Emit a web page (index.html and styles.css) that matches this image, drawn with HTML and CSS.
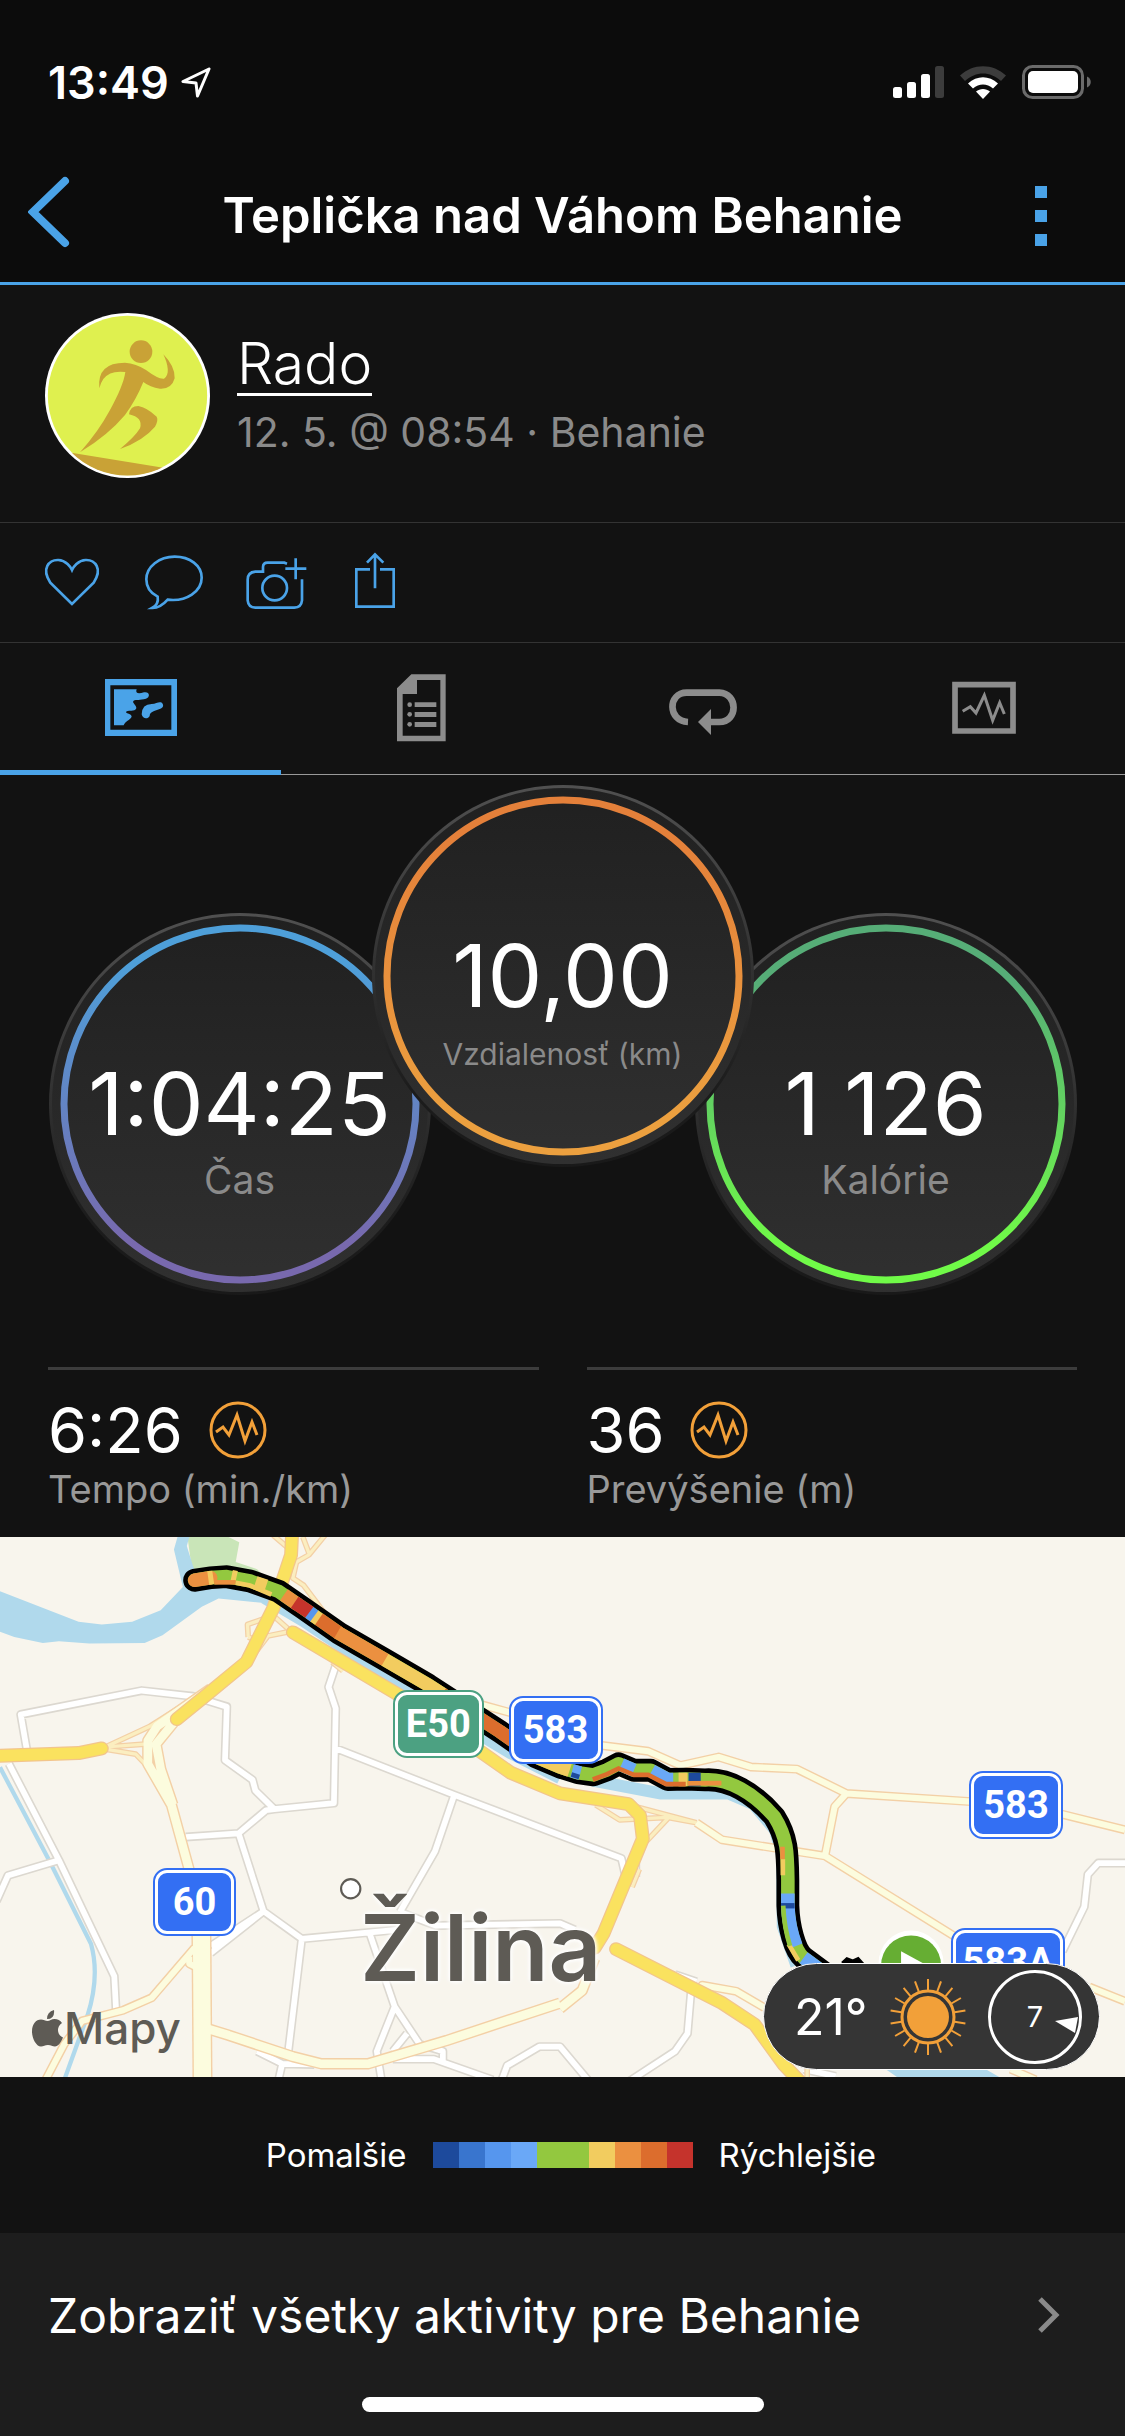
FILE: index.html
```html
<!DOCTYPE html>
<html lang="sk">
<head>
<meta charset="utf-8">
<meta name="viewport" content="width=device-width, initial-scale=1">
<title>Teplička nad Váhom Behanie</title>
<link rel="stylesheet" href="styles.css">
</head>
<body>
<header class="top">
  <div class="status">
    <div class="status-left">
      <span>13:49</span>
      <svg width="30" height="31" viewBox="0 0 30 31" fill="none" stroke="#fff" stroke-width="3" stroke-linejoin="round"><path d="M28 2 2 14.500l13 1.500 1.500 13z"/></svg>
    </div>
    <div class="status-right">
      <svg width="51" height="32" viewBox="0 0 51 32"><g fill="#fff"><rect y="21" width="9" height="11" rx="2.500"/><rect x="14" y="16" width="9" height="16" rx="2.500"/><rect x="28" y="8" width="9" height="24" rx="2.500"/></g><rect x="42" width="9" height="32" rx="2.500" fill="#3c3c3c"/></svg>
      <svg width="46" height="33" viewBox="0 0 46 33"><path d="M0 9.500C13-3 33-3 46 9.500l-5 5.500C30 5 16 5 5 15z" fill="#3c3c3c"/><path d="M8 17.500c9-8.500 21-8.500 30 0l-5 5c-6-5.500-14-5.500-20 0z" fill="#fff"/><path d="M16 25.500c4-3.500 10-3.500 14 0l-7 7.500z" fill="#fff"/></svg>
      <svg width="69" height="34" viewBox="0 0 69 34"><rect x="1.500" y="1.500" width="59" height="31" rx="9" fill="none" stroke="#6b6b6b" stroke-width="3"/><rect x="6" y="6" width="50" height="22" rx="5" fill="#fff"/><path d="M65 11.500c5 2 5 9 0 11z" fill="#6b6b6b"/></svg>
    </div>
  </div>
  <nav class="nav">
    <button class="icon-button nav-back" type="button" aria-label="Späť"><svg width="42" height="72" viewBox="0 0 42 72" fill="none" stroke="#4aa3e8" stroke-width="8" stroke-linecap="round"><path d="M37 5 5 36l32 31"/></svg></button>
    <h1 class="title">Teplička nad Váhom Behanie</h1>
    <button class="icon-button nav-menu" type="button" aria-label="Ponuka"><svg width="12" height="60" viewBox="0 0 12 60" fill="#4aa3e8"><path d="M0 0h12v12H0zM0 24h12v12H0zM0 48h12v12H0z"/></svg></button>
  </nav>
</header>

<main>
  <section class="profile">
    <svg class="avatar" viewBox="45 39 495 495">
      <defs><clipPath id="avatar-clip"><circle cx="292.500" cy="286.500" r="240"/></clipPath></defs>
      <circle cx="292.500" cy="286.500" r="247.500" fill="#fff"/>
      <circle cx="292.500" cy="286.500" r="239" fill="#dff04f"/>
      <g fill="#c9a236" clip-path="url(#avatar-clip)">
        <circle cx="333" cy="155" r="34"/>
        <path d="M208 265Q200 188 285 188 318 190 348 210 385 238 402 236C420 226 415 195 400 163Q436 200 434 235 425 268 390 266 360 262 340 246 318 300 285 345 235 405 150 457 205 395 240 330C265 285 282 245 286 216Q240 210 220 237 211 250 208 265z"/>
        <path d="M297 343Q300 318 325 318 350 322 380 350 386 360 375 380 340 422 270 447 315 410 330 385 340 352 297 343z"/>
        <path d="M110 456 400 503 420 540H110z"/>
      </g>
    </svg>
    <div class="profile-text">
      <a class="name" href="#profil">Rado</a>
      <p class="meta">12. 5. @ 08:54 · Behanie</p>
    </div>
  </section>

  <section class="actions">
    <button class="icon-button" type="button" aria-label="Páči sa mi"><svg width="54" height="60" viewBox="45 758 162 180" class="line-icon"><path d="M126 911 61 847C33 805 57 778 85 779 108 780 122 800 126 809 130 800 144 780 167 779 195 778 219 805 191 847z"/></svg></button>
    <button class="icon-button" type="button" aria-label="Komentovať"><svg width="60" height="60" viewBox="342 758 180 180" class="line-icon"><path d="M366 923Q387 912 383 889C360 878 349 860 349 837 349 799 388 769 434 769S515 796 515 832C515 872 470 905 413 898Q390 924 366 923z"/></svg></button>
    <button class="icon-button" type="button" aria-label="Pridať fotografiu"><svg width="60" height="60" viewBox="656 758 180 180" class="line-icon"><path d="M770 790 762 787H712Q698 787 698 800V814H675Q652 816 652 838V900Q654 921 675 922H792Q813 921 815 900V837M765 805H828M796 774V837"/><circle cx="733" cy="863" r="37"/></svg></button>
    <button class="icon-button" type="button" aria-label="Zdieľať"><svg width="42" height="60" viewBox="972 758 126 180" class="line-icon"><path d="M1020 807H979V919H1091V807H1050M1035 762V864M1011 787 1035 762 1060 787"/></svg></button>
  </section>

  <nav class="tabs">
    <button class="icon-button tab tab-active" type="button" aria-label="Mapa"><svg width="72" height="57" viewBox="45 57 216 171"><path fill="currentColor" fill-rule="evenodd" d="M45 57H261V228H45zM61 76V209H244V76z"/><path fill="currentColor" d="M72 88H140C135 100 145 103 162 97 180 94 181 112 168 116 150 121 138 118 131 122 124 128 140 134 139 145 134 158 115 147 108 156 109 162 124 160 125 170 120 180 105 184 101 196H72zM155 163Q156 132 185 132C198 131 205 125 213 127 223 133 221 144 209 147 185 155 180 158 179 168 174 178 158 178 155 163z"/></svg></button>
    <button class="icon-button tab" type="button" aria-label="Podrobnosti"><svg width="49" height="68" viewBox="922 41 147 204" fill="currentColor"><path fill-rule="evenodd" d="M965 42H1068V243H922V84zM982 59V101H939V226H1052V59z"/><path d="M975 126h65v14h-65zM975 155h65v15h-65zM975 185h65v15h-65z"/><circle cx="960" cy="133" r="7"/><circle cx="960" cy="162" r="7"/><circle cx="960" cy="192" r="7"/></svg></button>
    <button class="icon-button tab" type="button" aria-label="Okruhy"><svg width="68" height="68" viewBox="57 41 204 204"><path d="M114 185C52 182 53 97 110 97H208C265 99 265 185 208 185H178" fill="none" stroke="currentColor" stroke-width="20"/><path d="M144 185 183 146V224z" fill="currentColor"/></svg></button>
    <button class="icon-button tab" type="button" aria-label="Grafy"><svg width="64" height="54" viewBox="907 62 192 162" fill="none" stroke="currentColor"><path stroke-width="17" d="M916 73H1090V212H916z"/><path stroke-width="9" d="M939 153 962 139 979 158 1004 105 1029 180 1050 127 1064 161"/></svg></button>
  </nav>

  <section class="rings">
    <div class="ring ring-side">
      <svg class="dial" viewBox="0 0 382 382">
        <defs>
          <linearGradient id="face" x2="0" y2="1"><stop stop-color="#202020"/><stop offset="1" stop-color="#303030"/></linearGradient>
          <linearGradient id="edge" x2="0" y2="1"><stop stop-color="#505050"/><stop offset=".5" stop-color="#303030"/><stop offset=".8" stop-color="#1c1c1c"/><stop offset="1" stop-color="#191919"/></linearGradient>
          <linearGradient id="blue" x2="0" y2="1"><stop offset=".1" stop-color="#4e9fd9"/><stop offset=".9" stop-color="#7869ae"/></linearGradient>
        </defs>
        <circle cx="191" cy="191" r="191" fill="url(#edge)"/><circle cx="191" cy="191" r="188" fill="url(#face)"/>
        <circle cx="191" cy="191" r="176" fill="none" stroke="url(#blue)" stroke-width="7"/>
      </svg>
      <div class="ring-text"><strong class="ring-value">1:04:25</strong><span class="ring-label">Čas</span></div>
    </div>
    <div class="ring ring-main">
      <svg class="dial" viewBox="0 0 382 382">
        <defs><linearGradient id="orange" x2="0" y2="1"><stop offset=".1" stop-color="#e4803a"/><stop offset=".9" stop-color="#eca03f"/></linearGradient></defs>
        <circle cx="191" cy="191" r="191" fill="url(#edge)"/><circle cx="191" cy="191" r="188" fill="url(#face)"/>
        <circle cx="191" cy="191" r="176" fill="none" stroke="url(#orange)" stroke-width="7"/>
      </svg>
      <div class="ring-text"><strong class="ring-value">10,00</strong><span class="ring-label ring-label-small">Vzdialenosť (km)</span></div>
    </div>
    <div class="ring ring-side">
      <svg class="dial" viewBox="0 0 382 382">
        <defs><linearGradient id="green" x2="0" y2="1"><stop offset=".15" stop-color="#56ad77"/><stop offset=".9" stop-color="#70fa48"/></linearGradient></defs>
        <circle cx="191" cy="191" r="191" fill="url(#edge)"/><circle cx="191" cy="191" r="188" fill="url(#face)"/>
        <circle cx="191" cy="191" r="176" fill="none" stroke="url(#green)" stroke-width="7"/>
      </svg>
      <div class="ring-text"><strong class="ring-value">1 126</strong><span class="ring-label">Kalórie</span></div>
    </div>
  </section>

  <section class="stats">
    <div class="stat">
      <div class="stat-row"><span class="stat-value">6:26</span>
        <button class="icon-button" type="button" aria-label="Graf tempa"><svg width="58" height="58" viewBox="0 0 58 58" fill="none" stroke="#f2a039" stroke-width="3"><circle cx="29" cy="29" r="27"/><path d="m7 31 7-5 6 8 8-20 8 26 7-19 5 13"/></svg></button></div>
      <p class="stat-label">Tempo (min./km)</p>
    </div>
    <div class="stat">
      <div class="stat-row"><span class="stat-value">36</span>
        <button class="icon-button" type="button" aria-label="Graf prevýšenia"><svg width="58" height="58" viewBox="0 0 58 58" fill="none" stroke="#f2a039" stroke-width="3"><circle cx="29" cy="29" r="27"/><path d="m7 31 7-5 6 8 8-20 8 26 7-19 5 13"/></svg></button></div>
      <p class="stat-label">Prevýšenie (m)</p>
    </div>
  </section>

  <section class="map">
    <svg class="map-canvas" viewBox="0 20 3150 1512" preserveAspectRatio="xMidYMid slice" fill="none">
      <defs>
        <g id="minor">
          <path d="M75 615 58 517 397 450 540 466 635 495 630 645 707 700 715 730 768 782 745 785 668 850 520 860M768 782 935 765 940 500 920 440 940 380M935 610 1272 742 1568 855 1740 920 1752 972M1780 932V972M1272 742 1218 900 1120 1070M668 850 738 1068 845 1145 1110 1120M738 1068 590 1185M738 1068 590 1165M845 1145 805 1480M1120 1070 1220 1108 1568 1102 1610 1120M1035 1130 1105 1335 1175 1440 1240 1460V1485M1105 1335 1055 1460 1068 1540M1100 1460 1140 1410M25 655 165 925 320 1250 325 1345M165 925 22 968-10 1040M720 1460 790 1495 880 1497M790 1495 780 1540M1100 1482H1215L1380 1540M1405 1540 1420 1500 1510 1447H1568L1650 1545M1880 1245 1936 1280 1925 1410 1890 1460 1760 1545M1890 1245 1950 1265M2975 1180 3036 1055 3046 965 3075 933H3150M2250 1510 2340 1530"/>
        </g>
        <g id="ramps">
          <path d="M295 608 420 550 570 455M295 608 405 600M295 614 380 628 430 680M695 300 693 265 765 240 810 280M810 285 750 297 695 370M695 300 720 310M765 15 812 55M910 15 865 70 830 90 820 135 850 155 910 235M848 20 865 65M930 370 960 395M1668 770 1735 812 1870 805 1950 820M1760 770 1950 820M1810 872 1870 808M1770 1000 1790 950M2260 1505V1540"/>
        </g>
        <g id="pale">
          <path d="M1350 490 1430 512 1560 575 1680 603 1815 620 1905 660 2012 636 2103 664 2232 670 2370 738 2720 761M2960 793 3150 840M2370 738 2337 775 2310 913M1950 820 2022 868 2310 913 2700 1155M3050 1280 3150 1320M1966 1290 1966 1275 2062 1292 2140 1338M2830 1510 2900 1540"/>
          <path d="M545 1170 425 1310 345 1345 230 1375 180 1440 125 1545M530 1195V1215L560 1230"/>
        </g>
        <g id="pale-wide">
          <path d="M590 445 440 550 414 590V655L480 770 532 960M490 535 437 600 450 670 484 770M575 1395 640 1415 820 1475 900 1495H1030L1250 1430 1568 1325M1568 1340 1630 1290 1665 1200"/>
        </g>
        <g id="main">
          <path d="M818 10 815 70 765 220 690 370 575 465 495 530M-10 633 220 625 285 612M820 287 1130 470M1330 610 1430 680 1568 738 1760 768 1792 800 1800 865 1690 1130 1665 1170M1725 1174 2022 1325 2113 1385 2194 1497 2240 1545"/>
        </g>
        <path id="track" d="M545 141Q590 132 635 131L700 143 780 172 850 220 950 290 1080 365 1200 435 1400 565 1500 635 1568 664 1618 680 1662 686 1700 672 1732 655 1775 673 1822 673 1870 699 1920 698 1975 700C2040 696 2110 736 2168 803 2205 862 2205 905 2206 982V1052C2208 1112 2225 1178 2250 1198L2320 1250"/>
      </defs>
      <path fill="#c9e5b8" d="M525 20H640L670 35 660 90 720 110 760 150 540 130z"/>
      <path fill="#b0d9ec" d="M0 172 220 257 285 265 370 257 450 225 512 160 487 55 497 20H530L523 45 540 100 560 150 780 185 760 207 612 192 565 215 455 295 405 317 250 318 165 312 120 317 40 300 0 285zM2480 1510 2530 1545H2820L2760 1510z"/>
      <g stroke="#b0d9ec"><path stroke-width="12" d="M0 665 140 930 255 1160Q280 1250 245 1360L180 1540"/><path stroke-width="34" d="M740 190 850 255 1140 450 1430 625 1568 695"/><path stroke-width="34" d="M1660 702 1850 738H2040L2110 768 2170 840 2190 910 2192 1110 2230 1220"/></g>
      <g stroke-linejoin="round">
        <use href="#minor" stroke="#dcd8d0" stroke-width="25"/><use href="#minor" stroke="#fff" stroke-width="16"/>
        <g stroke="#f3d0a6"><use href="#ramps" stroke-width="16"/><use href="#pale" stroke-width="25"/><use href="#pale-wide" stroke-width="32"/><path stroke-width="56" d="M564 1130 567 1540"/></g>
        <use href="#ramps" stroke="#fbeec0" stroke-width="9"/>
        <g stroke="#fcfcde"><use href="#pale" stroke-width="17"/><use href="#pale-wide" stroke-width="24"/><path stroke-width="48" d="M564 1130 567 1540"/></g>
        <g stroke-linecap="round"><use href="#main" stroke="#f2c58c" stroke-width="39"/><use href="#main" stroke="#fae25f" stroke-width="32"/></g>
        <use href="#track" stroke="#000" stroke-width="64" stroke-linecap="round"/>
        <use href="#track" stroke="#93c83f" stroke-width="38" stroke-linecap="round"/>
      </g>
      <g stroke-width="38">
        <path stroke="#eb9040" stroke-linecap="round" d="M545 141 590 134"/>
        <path stroke="#f2cc5f" d="M583 135 597 133M648 131 662 134M715 148 745 158"/>
        <path stroke="#eb9040" d="M795 182 835 210"/>
        <path stroke="#c5332c" d="M825 203 868 232"/>
        <path stroke="#5696ee" d="M866 231 882 243"/>
        <path stroke="#f2cc5f" d="M880 241 895 252"/>
        <path stroke="#dc6d2d" d="M893 250 950 290"/>
        <path stroke="#eb9040" d="M945 287 1080 365"/>
        <path stroke="#f2cc5f" d="M1078 364 1200 435 1240 461"/>
        <path stroke="#dc6d2d" d="M1238 460 1400 565 1500 635"/>
        <path stroke="#f2cc5f" d="M1500 635 1568 664 1595 673"/>
        <path stroke="#6aa8f7" d="M1602 675 1625 681M1740 658 1775 673M1825 675 1870 699 1885 699"/>
        <path stroke="#f2cc5f" d="M1900 699H1925"/>
        <path stroke="#1d4a9c" d="M1928 699H1962"/>
        <path stroke="#6aa8f7" d="M2206 1018V1052Q2208 1112 2229 1165M2250 1198 2320 1250"/>
        <path stroke="#1d4a9c" d="M2206 1045V1060"/>
      </g>
      <g stroke-width="13">
        <path stroke="#eb9040" d="M600 147 660 147"/><path stroke="#f2cc5f" d="M660 148 700 156 760 181"/>
        <path stroke="#dc6d2d" d="M1660 699 1700 684 1732 668 1775 686 1815 686 1865 712H1920"/>
        <path stroke="#eb9040" d="M1925 710 2020 709M2191 887V922"/><path stroke="#f2cc5f" d="M2192 922V967M2208 1160 2235 1205"/>
        <path stroke="#93c83f" d="M2193 1052Q2195 1110 2212 1165"/>
        <path stroke="#1d4a9c" d="M1600 685 1622 692"/>
      </g>
      <path stroke="#000" stroke-width="14" d="M2360 1215 2372 1204 2388 1210 2402 1204 2415 1218"/>
      <circle cx="2551" cy="1213" r="91" fill="#fff"/><circle cx="2551" cy="1220" r="84" fill="#66ae33"/><path fill="#fff" d="M2523 1180 2600 1222 2523 1264z"/>
      <circle cx="982" cy="1005" r="27" fill="#fff" stroke="#5e5b55" stroke-width="6"/>
    </svg>
    <span class="city">Žilina</span>
    <span class="shield shield-e50">E50</span>
    <span class="shield shield-583-west">583</span>
    <span class="shield shield-583-east">583</span>
    <span class="shield shield-60">60</span>
    <span class="shield shield-583a">583A</span>
    <span class="credit"><svg width="31" height="37" viewBox="0 0 31 37" fill="#5e5b55"><path d="M22 0q1 9-7 9 0-7 7-9zM15.500 11c2 0 4-2 7-2 3 0 6 1.500 7.500 4-6 4-5 12 1 14.500-2 5-5 9-8 9-2.500 0-4-1.500-7-1.500s-4.500 1.500-7 1.500C4 36.500 0 28 0 21.500 0 14 4 9.500 9 9.500c2.500 0 4.500 1.500 6.500 1.500z"/></svg>Mapy</span>
    <div class="weather">
      <span class="temp">21°</span>
      <svg class="sun" width="76" height="76" viewBox="-38 -38 76 76"><circle r="21" fill="#f2a039"/><g fill="none" stroke="#f2a039"><circle r="26" stroke-width="3"/><path stroke-width="2" d="M0-27V-38M0 27V38M9.200-25.400 13-35.700M-9.200 25.400-13 35.700M17.400-20.700 24.400-29.100M-17.400 20.700-24.400 29.100M23.400-13.500 32.900-19M-23.400 13.500-32.900 19M26.600-4.700 37.400-6.600M-26.600 4.700-37.400 6.600M26.600 4.700 37.400 6.600M-26.600-4.700-37.400-6.600M23.400 13.500 32.900 19M-23.400-13.500-32.900-19M17.400 20.700 24.400 29.100M-17.400-20.700-24.400-29.100M9.200 25.400 13 35.700M-9.200-25.400-13-35.700"/></g></svg>
      <span class="wind"><svg class="wind-arrow" width="24" height="16" viewBox="0 0 24 16" fill="#fff"><path d="M0 4 23 0 20 16z"/></svg>7</span>
    </div>
  </section>

  <section class="legend">
    <span class="legend-slow">Pomalšie</span>
    <span class="scale"><i class="s1"></i><i class="s2"></i><i class="s3"></i><i class="s4"></i><i class="s5"></i><i class="s5"></i><i class="s6"></i><i class="s7"></i><i class="s8"></i><i class="s9"></i></span>
    <span>Rýchlejšie</span>
  </section>
</main>

<footer class="bottom">
  <a class="all-link" href="#aktivity"><span>Zobraziť všetky aktivity pre Behanie</span>
    <svg width="22" height="36" viewBox="0 0 22 36" fill="none" stroke="#8a8a8a" stroke-width="5"><path d="m2 2 16 16L2 34"/></svg></a>
  <div class="home"></div>
</footer>
</body>
</html>
```
FILE: styles.css
```css
* { box-sizing: border-box; }

body {
  margin: 0;
  background: #121212;
  color: #fff;
  font-family: Inter, "Liberation Sans", sans-serif;
}

p, h1 { margin: 0; }
svg { display: block; flex: none; }

.icon-button {
  display: flex;
  align-items: center;
  justify-content: center;
  padding: 0;
  border: 0;
  background: none;
  color: inherit;
}

.top {
  background: #0c0c0c;
  border-bottom: 3px solid #4aa3e8;
}

.status {
  display: flex;
  align-items: center;
  justify-content: space-between;
  height: 150px;
  padding: 14px 34px 0 48px;
  font-size: 45px;
  font-weight: 600;
}

.status-left { display: flex; align-items: center; gap: 12px; }
.status-right { display: flex; align-items: center; gap: 16px; }

.nav {
  display: grid;
  grid-template-columns: 120px 1fr 120px;
  align-items: center;
  height: 132px;
}

.nav-back { justify-content: flex-start; padding: 0 0 8px 28px; }
.nav-menu { justify-content: flex-end; padding-right: 78px; }
.title { font-size: 49px; font-weight: 600; line-height: 60px; text-align: center; white-space: nowrap; }

.profile {
  display: flex;
  gap: 27px;
  padding: 28px 45px 44px;
  border-bottom: 1px solid #333;
}

.avatar { width: 165px; height: 165px; }
.profile-text { padding-top: 22px; }

.name {
  display: inline-block;
  border-bottom: 3px solid #fff;
  color: #fff;
  font-size: 57px;
  font-weight: 300;
  line-height: 58px;
  text-decoration: none;
}

.meta { margin-top: 12px; color: #8a8a8a; font-size: 41px; line-height: 48px; }

.actions {
  display: flex;
  align-items: center;
  gap: 45px;
  height: 120px;
  padding: 0 45px;
  border-bottom: 1px solid #333;
}

.line-icon { overflow: visible; fill: none; stroke: #4aa3e8; stroke-width: 8; }

.tabs {
  display: grid;
  grid-template-columns: repeat(4, 1fr);
  height: 132px;
  box-shadow: inset 0 -1px #999;
}

.tab { padding-top: 2px; color: #8c8c8c; border-bottom: 5px solid transparent; }
.tab-active { color: #4aa3e8; border-color: #4aa3e8; }

.rings {
  display: flex;
  justify-content: center;
  padding: 10px 0 72px;
}

.ring { display: grid; width: 382px; height: 382px; }
.ring-side { margin-top: 128px; }
.ring-main { z-index: 1; margin: 0 -59px; }
.dial { grid-area: 1 / 1; width: 382px; height: 382px; }

.ring-text {
  grid-area: 1 / 1;
  display: flex;
  flex-direction: column;
  gap: 7px;
  padding-top: 146px;
  text-align: center;
}

.ring-value { font-size: 87px; font-weight: 400; line-height: 90px; white-space: nowrap; }
.ring-label { color: #8a8a8a; font-size: 39px; line-height: 48px; }
.ring-label-small { font-size: 30px; line-height: 52px; }

.stats {
  display: grid;
  grid-template-columns: 1fr 1fr;
  gap: 48px;
  padding: 0 48px 24px;
}

.stat { border-top: 3px solid #3c3c3c; padding-top: 30px; }
.stat-row { display: flex; align-items: center; gap: 26px; height: 60px; }
.stat-value { font-size: 63px; line-height: 60px; }
.stat-label { margin-top: 5px; color: #999; font-size: 38px; line-height: 48px; }

.map { position: relative; height: 540px; overflow: hidden; background: #f8f5ed; }
.map-canvas { width: 100%; height: 100%; }

.city {
  position: absolute;
  left: 32%;
  top: 356px;
  color: #5e5b55;
  font-size: 92px;
  font-weight: 600;
  line-height: 110px;
  text-shadow: 0 0 4px #fff, 0 0 4px #fff, 0 0 6px #fff;
}

.shield {
  position: absolute;
  height: 66px;
  border: 4px solid #fff;
  border-radius: 13px;
  outline: 2px solid #336ff3;
  outline-offset: -1px;
  background: #336ff3;
  color: #fff;
  font-family: Roboto, "Liberation Sans", sans-serif;
  font-size: 38px;
  font-weight: 700;
  line-height: 58px;
  text-align: center;
}

.shield-e50 { left: 35%; top: 154px; width: 89px; background: #4ca182; outline-color: #4ca182; }
.shield-583-west { left: calc(50% - 53px); top: 160px; width: 92px; }
.shield-583-east { right: 63px; top: 235px; width: 92px; }
.shield-60 { left: 154px; top: 332px; width: 81px; }
.shield-583a { right: 61px; top: 392px; width: 112px; }

.credit {
  position: absolute;
  left: 32px;
  bottom: 21px;
  display: flex;
  align-items: center;
  gap: 1px;
  color: #5e5b55;
  font-size: 44px;
  font-weight: 500;
  line-height: 56px;
}

.weather {
  position: absolute;
  right: 25px;
  bottom: 7px;
  display: flex;
  align-items: center;
  justify-content: space-between;
  width: 337px;
  height: 107px;
  padding: 0 17px 0 30px;
  border: 1px solid #fff;
  border-radius: 54px;
  background: #353535;
}

.temp { font-size: 50px; }

.wind {
  position: relative;
  width: 94px;
  height: 94px;
  border: 3px solid #fff;
  border-radius: 50%;
  font-size: 29px;
  line-height: 88px;
  text-align: center;
}

.wind-arrow { position: absolute; right: 0; top: 44px; }

.legend {
  display: grid;
  grid-template-columns: 1fr auto 1fr;
  align-items: center;
  gap: 26px;
  height: 156px;
  font-size: 33px;
}

.legend-slow { text-align: right; }
.scale { display: flex; }
.scale i { width: 26px; height: 26px; }
.s1 { background: #1d4a9c; }
.s2 { background: #3975ce; }
.s3 { background: #5696ee; }
.s4 { background: #6aa8f7; }
.s5 { background: #93c83f; }
.s6 { background: #f2cc5f; }
.s7 { background: #eb9040; }
.s8 { background: #dc6d2d; }
.s9 { background: #c5332c; }

.bottom { padding-bottom: 24px; background: #1d1d1d; }

.all-link {
  display: flex;
  align-items: center;
  justify-content: space-between;
  height: 164px;
  padding: 0 65px 0 48px;
  color: #fff;
  font-size: 48px;
  text-decoration: none;
}

.home { width: 402px; height: 15px; margin: 0 auto; border-radius: 8px; background: #fff; }
```
